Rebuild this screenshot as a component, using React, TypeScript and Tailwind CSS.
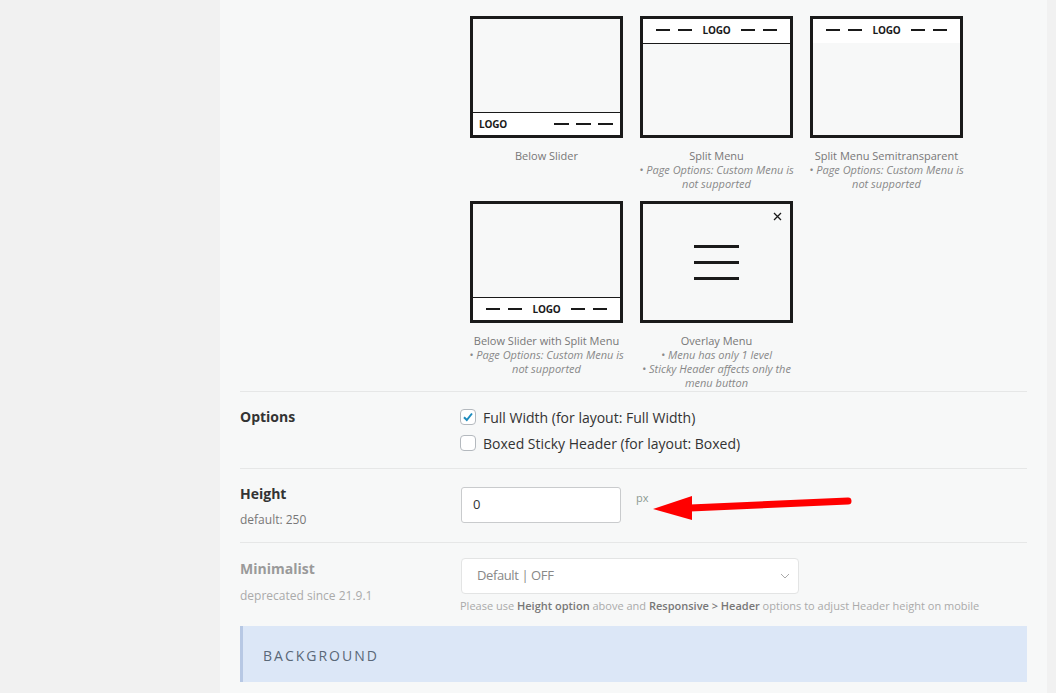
import React from "react";

const Dash = ({ w = 15 }: { w?: number }) => (
  <div className="h-[2px] bg-[#1a1a1a]" style={{ width: w }} />
);

const Logo = () => (
  <span className="text-[10px] font-bold leading-none text-[#1a1a1a] tracking-[-0.2px]">LOGO</span>
);

const Tile = ({ children, caption, notes }: { children: React.ReactNode; caption: string; notes?: string[] }) => (
  <div className="flex w-[153px] flex-col">
    <div className="relative flex h-[122px] w-[153px] flex-col border-[3px] border-[#1a1a1a] bg-[#f7f8f8]">
      {children}
    </div>
    <div className="-mx-[5px] mt-[11px] text-center text-[11px] leading-[14px] text-[#777]">
      <div>{caption}</div>
      {notes?.map((n) => (
        <div key={n} className="italic text-[#888]">
          {n}
        </div>
      ))}
    </div>
  </div>
);

const SplitBar = () => (
  <>
    <div className="flex gap-[8px]">
      <Dash w={14} />
      <Dash w={14} />
    </div>
    <div className="mx-[10px] flex">
      <Logo />
    </div>
    <div className="flex gap-[8px]">
      <Dash w={14} />
      <Dash w={14} />
    </div>
  </>
);

export default function App() {
  return (
    <div
      className="relative flex h-[693px] w-[1056px] overflow-hidden bg-[#f1f1f1]"
      style={{ fontFamily: '"Open Sans", "Noto Sans", sans-serif' }}
    >
      <div className="w-[220px] shrink-0" />
      <div className="w-[827px] shrink-0 bg-[#f7f8f8] px-5">
        {/* Layout tiles */}
        <div className="border-b border-[#e6e7e7] pb-px pl-[230px] pt-4">
          <div className="grid grid-cols-[153px_153px_153px] gap-x-[17px] gap-y-[10px]">
            <Tile caption="Below Slider">
              <div className="flex-1" />
              <div className="flex h-[23px] items-center justify-between border-t border-[#1a1a1a] bg-white pl-[6px] pr-[7px]">
                <Logo />
                <div className="flex gap-[7px]">
                  <Dash />
                  <Dash />
                  <Dash />
                </div>
              </div>
            </Tile>
            <Tile caption="Split Menu" notes={["• Page Options: Custom Menu is not supported"]}>
              <div className="flex h-[25px] items-center justify-center border-b border-[#1a1a1a] bg-white pb-[2px]">
                <SplitBar />
              </div>
            </Tile>
            <Tile caption="Split Menu Semitransparent" notes={["• Page Options: Custom Menu is not supported"]}>
              <div className="flex h-[24px] items-center justify-center bg-white pb-[2px]">
                <SplitBar />
              </div>
            </Tile>
            <Tile caption="Below Slider with Split Menu" notes={["• Page Options: Custom Menu is not supported"]}>
              <div className="flex-1" />
              <div className="flex h-[23px] items-center justify-center border-t border-[#1a1a1a] bg-white">
                <SplitBar />
              </div>
            </Tile>
            <Tile
              caption="Overlay Menu"
              notes={["• Menu has only 1 level", "• Sticky Header affects only the menu button"]}
            >
              <div className="flex flex-1 flex-col items-center justify-center gap-[13px]">
                <div className="h-[3px] w-[45px] bg-[#1a1a1a]" />
                <div className="h-[3px] w-[45px] bg-[#1a1a1a]" />
                <div className="h-[3px] w-[45px] bg-[#1a1a1a]" />
              </div>
              <svg className="absolute right-[8px] top-[8px]" width="9" height="9" viewBox="0 0 9 9">
                <path d="M1 1L8 8M8 1L1 8" stroke="#1a1a1a" strokeWidth="1.3" />
              </svg>
            </Tile>
          </div>
        </div>

        {/* Options */}
        <div className="flex border-b border-[#e6e7e7] pb-[12px] pt-[12px]">
          <div className="w-[220px] shrink-0 pt-[3px] text-[14px] font-bold leading-5 text-[#333]">Options</div>
          <div className="flex flex-col">
            <label className="flex h-[26px] items-center gap-[7px] text-[14px] text-[#333]">
              <span className="flex h-4 w-4 items-center justify-center rounded-[4px] border border-[#b4b9be] bg-white">
                <svg width="12" height="12" viewBox="0 0 12 12">
                  <path d="M2 6.2L4.8 9L10 2.5" fill="none" stroke="#1e8cbe" strokeWidth="2" />
                </svg>
              </span>
              Full Width (for layout: Full Width)
            </label>
            <label className="flex h-[26px] items-center gap-[7px] text-[14px] text-[#333]">
              <span className="h-4 w-4 rounded-[4px] border border-[#b4b9be] bg-white" />
              Boxed Sticky Header (for layout: Boxed)
            </label>
          </div>
        </div>

        {/* Height */}
        <div className="flex border-b border-[#e6e7e7] pb-[19px] pt-[18px]">
          <div className="h-[36px] w-[221px] shrink-0">
            <div className="-mt-[3px] text-[14px] font-bold leading-5 text-[#333]">Height</div>
            <div className="mt-[8px] text-[12px] leading-4 text-[#777]">default: 250</div>
          </div>
          <div className="flex h-[36px] w-[160px] items-center rounded-[3px] border border-[#c9cbcd] bg-white px-[11px] text-[13px] text-[#333]">
            0
          </div>
          <div className="ml-[15px] mt-[3px] text-[11px] leading-4 text-[#8d9a92]">px</div>
        </div>

        {/* Minimalist */}
        <div className="flex pt-[15px]">
          <div className="w-[221px] shrink-0">
            <div className="pt-px text-[14px] font-bold leading-5 text-[#9a9a9a]">Minimalist</div>
            <div className="mt-[9px] text-[12px] leading-4 text-[#aaa]">deprecated since 21.9.1</div>
          </div>
          <div className="flex flex-col">
            <div className="flex h-[36px] w-[338px] items-center justify-between rounded-[4px] border border-[#e3e4e4] bg-white pl-[15px] pr-[8px] text-[13px] tracking-[-0.4px] text-[#888]">
              <span>Default | OFF</span>
              <svg width="10" height="6" viewBox="0 0 10 6">
                <path d="M1 1L5 5L9 1" fill="none" stroke="#aaa" strokeWidth="1" />
              </svg>
            </div>
            <div className="-ml-px mt-[5px] whitespace-nowrap text-[11px] leading-[14px] text-[#aaa]">
              Please use <span className="font-semibold text-[#777]">Height option</span> above and{" "}
              <span className="font-semibold text-[#777]">Responsive &gt; Header</span> options to adjust Header height on mobile
            </div>
          </div>
        </div>

        {/* Background band */}
        <div className="mt-[13px] flex h-[56px] items-center border-l-[3px] border-[#b7c8e4] bg-[#dce7f7] pl-5 pt-[2px]">
          <span className="text-[14px] tracking-[2px] text-[#5a6878]">BACKGROUND</span>
        </div>
      </div>

      {/* Red arrow annotation */}
      <svg className="absolute left-[650px] top-[490px]" width="205" height="35" viewBox="0 0 205 35">
        <path d="M40 18L198 11" stroke="#ff0000" strokeWidth="7" strokeLinecap="round" />
        <path d="M3 19L42 6L42 30Z" fill="#ff0000" />
      </svg>
    </div>
  );
}
